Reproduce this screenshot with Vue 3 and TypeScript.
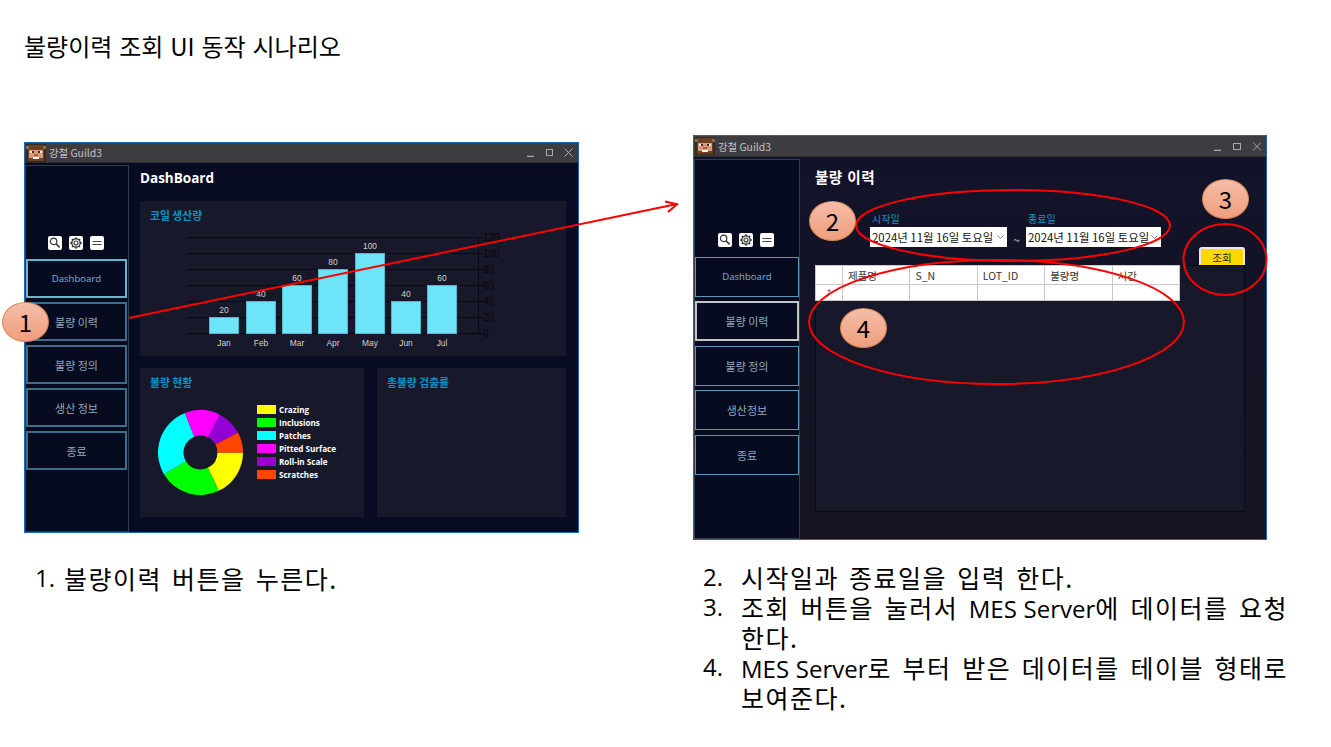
<script setup lang="ts">
const nav1 = ['Dashboard', '불량 이력', '불량 정의', '생산 정보', '종료']
const nav2 = ['Dashboard', '불량 이력', '불량 정의', '생산정보', '종료']
const bars = [
  { m: 'Jan', v: 20, x: 69 },
  { m: 'Feb', v: 40, x: 106 },
  { m: 'Mar', v: 60, x: 142 },
  { m: 'Apr', v: 80, x: 178 },
  { m: 'May', v: 100, x: 215 },
  { m: 'Jun', v: 40, x: 251 },
  { m: 'Jul', v: 60, x: 287 },
]
const ticks = [0, 20, 40, 60, 80, 100, 120]
const base = 104.5
const yOf = (v: number) => base - v * 0.8
const slices = [
  { c: '#ffff00', a: 0, b: 64.5, n: 'Crazing' },
  { c: '#00ff00', a: 64.5, b: 149.3, n: 'Inclusions' },
  { c: '#00ffff', a: 149.3, b: 248.5, n: 'Patches' },
  { c: '#ff00ff', a: 248.5, b: 297, n: 'Pitted Surface' },
  { c: '#9400d3', a: 297, b: 332, n: 'Roll-in Scale' },
  { c: '#ff4500', a: 332, b: 360, n: 'Scratches' },
]
function arc(a: number, b: number): string {
  const R = 42.5, r = 17, cx = 43.5, cy = 43.5
  const p = (rad: number, d: number) => {
    const t = (d * Math.PI) / 180
    return `${(cx + rad * Math.cos(t)).toFixed(2)} ${(cy + rad * Math.sin(t)).toFixed(2)}`
  }
  const large = b - a > 180 ? 1 : 0
  return `M${p(R, a)}A${R} ${R} 0 ${large} 1 ${p(R, b)}L${p(r, b)}A${r} ${r} 0 ${large} 0 ${p(r, a)}Z`
}
const columns = ['제품명', 'S_N', 'LOT_ID', '불량명', '시간']
const date = '2024년 11월 16일 토요일'
const facePixels = [
  { x: 0, y: 0, w: 20, h: 18, f: '#3a2a1e' },
  { x: 2, y: 1, w: 16, h: 16, f: '#6b3f22' },
  { x: 0, y: 2, w: 3, h: 3, f: '#8a6a4e' },
  { x: 17, y: 2, w: 3, h: 3, f: '#8a6a4e' },
  { x: 3, y: 6, w: 14, h: 8, f: '#d8997a' },
  { x: 4, y: 7, w: 4, h: 2, f: '#f4efe8' },
  { x: 12, y: 7, w: 4, h: 2, f: '#f4efe8' },
  { x: 6, y: 7, w: 2, h: 2, f: '#40281a' },
  { x: 12, y: 7, w: 2, h: 2, f: '#40281a' },
  { x: 8, y: 10, w: 4, h: 2, f: '#a7623f' },
  { x: 7, y: 13, w: 6, h: 2, f: '#f7f2ea' },
]
</script>

<template>
  <div class="page">
    <h1 class="heading">불량이력 조회 UI 동작 시나리오</h1>

    <div class="windows">
      <section class="win win-a">
        <header class="titlebar">
          <svg class="face" viewBox="0 0 20 18" shape-rendering="crispEdges">
            <rect v-for="(p, i) in facePixels" :key="i" :x="p.x" :y="p.y" :width="p.w" :height="p.h" :fill="p.f" />
          </svg>
          <span class="wintitle">강철 Guild3</span>
          <span class="controls">
            <svg width="46" height="9" viewBox="0 0 46 9" fill="none" stroke="#a8a8ac" stroke-width="1">
              <path d="M0 8.5h7" stroke-width="1.5" />
              <rect x="19.5" y="1.5" width="6" height="6" />
              <path d="M37.5 .5l8 8M45.5 .5l-8 8" />
            </svg>
          </span>
        </header>
        <div class="winbody">
          <aside class="side">
            <div class="tools">
              <span class="tool"><svg viewBox="0 0 14 14" fill="none" stroke="#333" stroke-width="1.2"><circle cx="5.6" cy="5.4" r="3.2" /><path d="M8 7.8l3.6 3.6" stroke-width="1.5" /></svg></span>
              <span class="tool"><svg viewBox="0 0 14 14" fill="none" stroke="#333" stroke-width="1.1"><circle cx="7" cy="7" r="2" /><circle cx="7" cy="7" r="4.2" stroke-width="1.3" /><path stroke-width="1.4" d="M7 1.2v1.8M7 11v1.8M1.2 7H3M11 7h1.8M2.9 2.9l1.2 1.2M9.9 9.9l1.2 1.2M11.1 2.9L9.9 4.1M4.1 9.9l-1.2 1.2" /></svg></span>
              <span class="tool"><svg viewBox="0 0 14 14" fill="none" stroke="#444" stroke-width="1.1"><path d="M2.5 5.5h9M2.5 8.5h9" /></svg></span>
            </div>
            <button v-for="(n, i) in nav1" :key="n" class="navbtn" :class="{ lit: i === 0 }">{{ n }}</button>
          </aside>
          <main class="content">
            <h2 class="pagetitle">DashBoard</h2>
            <div class="panel chartpanel">
              <h3 class="ptitle">코일 생산량</h3>
              <svg class="chart" width="426" height="127" viewBox="0 0 426 127">
                <g v-for="t in ticks" :key="t">
                  <path :d="`M47 ${yOf(t)}H339`" stroke="#08080f" stroke-width="1" />
                  <path :d="`M339 ${yOf(t)}h4`" stroke="#08080f" stroke-width="1" />
                  <text :x="343" :y="yOf(t) + 3.5" class="axis">{{ t }}</text>
                </g>
                <path d="M338.5 8v97" stroke="#08080f" />
                <g v-for="b in bars" :key="b.m">
                  <rect :x="b.x + 0.5" :y="yOf(b.v)" width="29" :height="b.v * 0.8" fill="#6ee4f8" stroke="#4fb8cc" />
                  <text :x="b.x + 15" :y="yOf(b.v) - 5" class="val">{{ b.v }}</text>
                  <text :x="b.x + 15" y="117" class="val">{{ b.m }}</text>
                </g>
              </svg>
            </div>
            <div class="lower">
              <div class="panel pie">
                <h3 class="ptitle">불량 현황</h3>
                <div class="pierow">
                  <svg class="donut" width="87" height="87" viewBox="0 0 87 87">
                    <path v-for="s in slices" :key="s.n" :d="arc(s.a, s.b)" :fill="s.c" />
                  </svg>
                  <ul class="legend">
                    <li v-for="s in slices" :key="s.n"><i :style="{ background: s.c }"></i>{{ s.n }}</li>
                  </ul>
                </div>
              </div>
              <div class="panel rate">
                <h3 class="ptitle">총불량 검출률</h3>
              </div>
            </div>
          </main>
        </div>
      </section>

      <section class="win win-b">
        <header class="titlebar">
          <svg class="face" viewBox="0 0 20 18" shape-rendering="crispEdges">
            <rect v-for="(p, i) in facePixels" :key="i" :x="p.x" :y="p.y" :width="p.w" :height="p.h" :fill="p.f" />
          </svg>
          <span class="wintitle">강철 Guild3</span>
          <span class="controls">
            <svg width="47" height="9" viewBox="0 0 47 9" fill="none" stroke="#a8a8ac" stroke-width="1">
              <path d="M0 8.5h7" stroke-width="1.5" />
              <rect x="19.5" y="1.5" width="7" height="6" />
              <path d="M39 .5l8 8M47 .5l-8 8" />
            </svg>
          </span>
        </header>
        <div class="winbody">
          <aside class="side">
            <div class="tools">
              <span class="tool"><svg viewBox="0 0 14 14" fill="none" stroke="#333" stroke-width="1.2"><circle cx="5.6" cy="5.4" r="3.2" /><path d="M8 7.8l3.6 3.6" stroke-width="1.5" /></svg></span>
              <span class="tool"><svg viewBox="0 0 14 14" fill="none" stroke="#333" stroke-width="1.1"><circle cx="7" cy="7" r="2" /><circle cx="7" cy="7" r="4.2" stroke-width="1.3" /><path stroke-width="1.4" d="M7 1.2v1.8M7 11v1.8M1.2 7H3M11 7h1.8M2.9 2.9l1.2 1.2M9.9 9.9l1.2 1.2M11.1 2.9L9.9 4.1M4.1 9.9l-1.2 1.2" /></svg></span>
              <span class="tool"><svg viewBox="0 0 14 14" fill="none" stroke="#444" stroke-width="1.1"><path d="M2.5 5.5h9M2.5 8.5h9" /></svg></span>
            </div>
            <button v-for="(n, i) in nav2" :key="n" class="navbtn" :class="{ active: i === 1, lit2: i === 0 }">{{ n }}</button>
          </aside>
          <main class="content">
            <h2 class="pagetitle">불량 이력</h2>
            <div class="filters">
              <label class="field">
                <span class="flabel">시작일</span>
                <span class="picker">{{ date }}<svg width="7" height="4" viewBox="0 0 7 4" fill="none" stroke="#888"><path d="M.5 .5l3 3 3-3" /></svg></span>
              </label>
              <span class="tilde">~</span>
              <label class="field">
                <span class="flabel">종료일</span>
                <span class="picker">{{ date }}<svg width="7" height="4" viewBox="0 0 7 4" fill="none" stroke="#888"><path d="M.5 .5l3 3 3-3" /></svg></span>
              </label>
              <button class="search">조회</button>
            </div>
            <div class="gridpanel">
              <table class="grid">
                <thead>
                  <tr>
                    <th class="rowhead"></th>
                    <th v-for="c in columns" :key="c">{{ c }}</th>
                  </tr>
                </thead>
                <tbody>
                  <tr>
                    <td class="rowhead">*</td>
                    <td v-for="c in columns" :key="c"></td>
                  </tr>
                </tbody>
              </table>
            </div>
          </main>
        </div>
      </section>
    </div>

    <div class="notes">
      <ol class="note-a">
        <li><span>1.</span><span>불량이력 버튼을 누른다.</span></li>
      </ol>
      <ol class="note-b">
        <li><span>2.</span><span>시작일과 종료일을 입력 한다.</span></li>
        <li><span>3.</span><span>조회 버튼을 눌러서 <b class="lat">MES Server</b>에 데이터를 요청 한다.</span></li>
        <li><span>4.</span><span><b class="lat">MES Server</b>로 부터 받은 데이터를 테이블 형태로 보여준다.</span></li>
      </ol>
    </div>

    <svg class="marks" width="1331" height="747" viewBox="0 0 1331 747" fill="none" stroke="#ff0000" stroke-width="2">
      <path d="M129 318L677 204" />
      <path d="M665 201.5L677 204.3L668 212" />
      <ellipse cx="1013" cy="225.5" rx="157" ry="35.5" />
      <ellipse cx="1225" cy="259.5" rx="41.5" ry="35.5" />
      <ellipse cx="996.5" cy="322" rx="187.5" ry="62" />
    </svg>
    <span class="bubble b1">1</span>
    <span class="bubble b2">2</span>
    <span class="bubble b3">3</span>
    <span class="bubble b4">4</span>
  </div>
</template>

<style>
html, body { margin: 0; background: #fff; }
</style>

<style scoped>
.page {
  position: relative;
  width: 1331px;
  height: 747px;
  overflow: hidden;
  background: #fff;
  font-family: "Noto Sans CJK KR", "Open Sans", sans-serif;
  color: #000;
}
.heading {
  margin: 0;
  padding: 30px 0 0 24px;
  height: 135px;
  box-sizing: border-box;
  font-size: 24px;
  font-weight: 400;
  line-height: 32px;
  word-spacing: 1.5px;
}
.windows { display: flex; align-items: flex-start; padding-left: 24px; height: 405px; }
.win {
  box-sizing: border-box;
  border: 1px solid #1c66b4;
  display: flex;
  flex-direction: column;
  font-family: "Noto Sans CJK KR", "Noto Sans", sans-serif;
}
.win-a { width: 555px; height: 391px; margin-top: 7px; background: #070c22; }
.win-b { width: 574px; height: 405px; margin-left: 114px; background: linear-gradient(#12132a, #161422); }
.titlebar {
  height: 20px;
  flex: none;
  box-sizing: border-box;
  display: flex;
  align-items: center;
  padding: 0 5px 0 1px;
  background: #3d3d41;
  border-bottom: 1px solid #2c2c2f;
}
.win-b .titlebar { height: 21px; }
.face { width: 20px; height: 18px; flex: none; }
.wintitle { margin-left: 3px; font-size: 10.4px; color: #c4c4c4; }
.controls { margin-left: auto; display: flex; }
.winbody { flex: 1; display: flex; min-height: 0; padding-top: 2px; }
.side {
  box-sizing: border-box;
  width: 104px;
  flex: none;
  display: flex;
  flex-direction: column;
  gap: 4px;
  padding: 0;
  border: 1px solid #2e3b50;
  background: #060b20;
}
.win-b .side { width: 106px; gap: 4.5px; }
.tools {
  display: flex;
  justify-content: center;
  gap: 7px;
  margin: 70px 0 5px;
  padding-right: 3px;
}
.win-b .tools { margin: 73px 0 5px; padding-right: 3px; }
.tool {
  width: 14px;
  height: 14px;
  border-radius: 2px;
  background: #fff;
  display: block;
}
.tool svg { width: 14px; height: 14px; display: block; }
.navbtn {
  box-sizing: border-box;
  height: 39px;
  width: 101px;
  flex: none;
  padding: 0;
  background: #060b20;
  border: 2px solid #3f6c88;
  font: 400 11px "Noto Sans CJK KR", "Noto Sans", sans-serif;
  color: #8fa9b8;
}
.win-b .navbtn { width: 104px; height: 40px; border: 1px solid #5b97b8; }
.navbtn.lit { border-color: #69b3d1; color: #7ab6d6; font-family: "Open Sans", sans-serif; font-size: 9.6px; }
.win-b .navbtn.lit2 { color: #7ab6d6; font-family: "Open Sans", sans-serif; font-size: 9.6px; }
.win-b .navbtn.active { border: 2px solid #c4c4c4; }
.content { flex: 1; min-width: 0; padding-left: 11px; }
.win-b .content { padding-left: 15px; }
.pagetitle {
  margin: 0;
  height: 36px;
  font: 700 13.5px/26px "Open Sans", "Noto Sans CJK KR", sans-serif;
  color: #fff;
}
.win-b .pagetitle { font: 700 14.6px/36px "Noto Sans CJK KR", sans-serif; word-spacing: 1px; letter-spacing: .4px; }
.panel { background: #171829; box-sizing: border-box; }
.ptitle {
  margin: 0;
  height: 28px;
  padding-left: 10px;
  box-sizing: border-box;
  font: 700 10.8px/28px "Noto Sans CJK KR", sans-serif;
  color: #0a93c8;
}
.chartpanel { width: 426px; height: 155px; }
.chart { display: block; }
.axis { font: 10px "Liberation Sans", sans-serif; fill: #07070d; }
.val { font: 8.4px "Liberation Sans", sans-serif; fill: #d2d2d2; text-anchor: middle; }
.lower { display: flex; gap: 13px; margin-top: 12px; }
.pie { width: 224px; height: 149px; }
.rate { width: 189px; height: 149px; }
.pierow { display: flex; align-items: flex-start; padding-left: 17px; }
.donut { display: block; margin-top: 13px; flex: none; }
.legend {
  list-style: none;
  margin: 7px 0 0 13px;
  padding: 0;
  font: 700 8.1px/13px "Open Sans", sans-serif;
  color: #fff;
}
.legend li { display: flex; align-items: center; height: 13px; white-space: nowrap; }
.legend i { display: block; width: 19px; height: 9px; margin-right: 3px; flex: none; }
.filters { display: flex; align-items: flex-end; width: 430px; height: 70px; padding-left: 55px; box-sizing: border-box; }
.field { display: flex; flex-direction: column; margin-bottom: 18px; }
.flabel { font-size: 10px; line-height: 12px; color: #0a93c8; padding-left: 2px; margin-bottom: 2px; }
.picker {
  box-sizing: border-box;
  width: 137px;
  height: 20px;
  background: #fff;
  font-size: 11.4px;
  line-height: 20px;
  color: #111;
  padding: 0 3px 0 2px;
  white-space: nowrap;
  display: flex;
  align-items: center;
  justify-content: space-between;
}
.field + .tilde + .field .picker { width: 135px; }
.tilde { width: 19px; text-align: center; margin-bottom: 18px; font-size: 12px; line-height: 15px; color: #c9c9c9; }
.search {
  margin-left: auto;
  box-sizing: border-box;
  width: 46px;
  height: 18px;
  padding: 0;
  border: 2px solid #e9e9e9;
  border-bottom: 0;
  border-radius: 3px 3px 0 0;
  background: #ffd800;
  font: 400 10.5px/15px "Noto Sans CJK KR", sans-serif;
  color: #222;
}
.gridpanel {
  box-sizing: border-box;
  width: 430px;
  height: 247px;
  border: 1px solid #0a0a12;
  background: #171829;
}
.grid {
  width: 365px;
  table-layout: fixed;
  border-collapse: collapse;
  background: #fff;
  font-size: 10.5px;
  color: #333;
  margin: -1px 0 0 -1px;
}
.grid th, .grid td { border: 1px solid #c9c9c9; padding: 0 0 0 5px; font-weight: 400; text-align: left; box-sizing: border-box; }
.grid th { height: 19px; }
.grid td { height: 16px; }
.grid .rowhead { width: 27px; text-align: center; padding: 0; font-size: 9px; color: #555; }
.notes {
  display: flex;
  margin-top: 22px;
  font-size: 25px;
  line-height: 30px;
  letter-spacing: 1.5px;
  word-spacing: 3px;
  word-break: keep-all;
}
.notes ol { margin: 0; padding: 0; list-style: none; box-sizing: border-box; }
.notes li { display: grid; }
.notes li > span:first-child { font: 400 24px/30px "Open Sans", sans-serif; letter-spacing: 0; }
.lat { font: 400 24px/1 "Open Sans", sans-serif; letter-spacing: 0; word-spacing: 0; }
.notes .note-a { margin-left: 35px; width: 668px; padding-top: 1px; }
.note-a li { grid-template-columns: 29px 1fr; }
.note-b { width: 585px; }
.note-b li { grid-template-columns: 38px 547px; text-align: justify; }
.marks { position: absolute; left: 0; top: 0; pointer-events: none; }
.bubble {
  position: absolute;
  box-sizing: border-box;
  width: 47px;
  height: 40px;
  border-radius: 50%;
  border: 1px solid #d68a58;
  background: linear-gradient(#f5bda7, #ef9e7e);
  font-size: 24px;
  line-height: 38px;
  text-align: center;
}
.b1 { left: 2px; top: 302px; }
.b2 { left: 809px; top: 201px; }
.b3 { left: 1202px; top: 179px; }
.b4 { left: 840px; top: 308px; }
</style>
